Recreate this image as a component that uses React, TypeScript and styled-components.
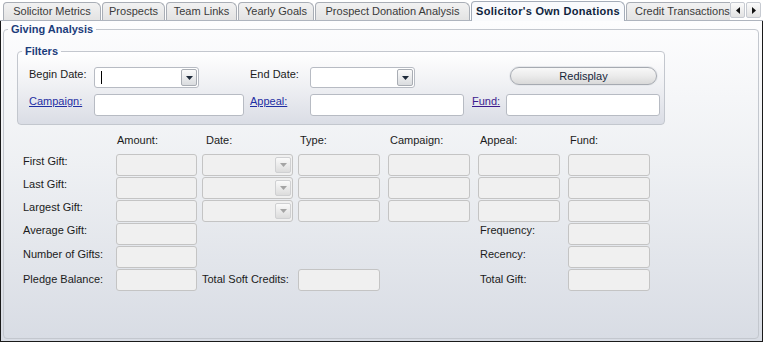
import React from 'react';
import styled, { createGlobalStyle } from 'styled-components';

const GlobalStyle = createGlobalStyle`
  html, body {
    margin: 0;
    padding: 0;
    background: #ffffff;
  }
  body {
    font-family: "Liberation Sans", Arial, sans-serif;
    font-size: 11px;
    color: #1b1b1b;
  }
  * {
    box-sizing: border-box;
  }
`;

const Frame = styled.div`
  width: 763px;
  height: 342px;
  display: flex;
  flex-direction: column;
  background: #ffffff;
  overflow: hidden;
`;

const TabStrip = styled.div`
  flex: none;
  height: 21px;
  display: flex;
  align-items: flex-end;
  padding-left: 3px;
  background: linear-gradient(#aeb4be, #aeb4be) bottom left / 100% 1px no-repeat, #ffffff;
`;

const TabList = styled.div`
  flex: 1;
  min-width: 0;
  height: 100%;
  display: flex;
  align-items: flex-end;
  gap: 1px;
  overflow: hidden;
`;

const Tab = styled.div<{ $active?: boolean; $w: number; $left?: boolean }>`
  flex: none;
  width: ${p => p.$w}px;
  height: ${p => (p.$active ? 20 : 18)}px;
  margin-bottom: ${p => (p.$active ? 0 : 1)}px;
  padding-left: ${p => (p.$left ? 8 : 0)}px;
  border: 1px solid ${p => (p.$active ? '#a5adb9' : '#a9aeb6')};
  border-bottom: none;
  border-radius: 4px 6px 0 0;
  background: ${p => (p.$active ? '#f9fafc' : 'linear-gradient(#f2f2f2, #e3e3e3)')};
  color: ${p => (p.$active ? '#0f1f3d' : '#3a3a3a')};
  font-weight: ${p => (p.$active ? 'bold' : 'normal')};
  letter-spacing: ${p => (p.$active ? '0.3px' : '0')};
  line-height: ${p => (p.$active ? 18 : 16)}px;
  text-align: ${p => (p.$left ? 'left' : 'center')};
  white-space: nowrap;
  overflow: hidden;
`;

const ScrollButtons = styled.div`
  flex: none;
  align-self: flex-start;
  margin-top: 2px;
  padding-right: 2px;
  display: flex;
  gap: 1px;
`;

const ScrollButton = styled.div`
  width: 15px;
  height: 16px;
  border: 1px solid #c6cad1;
  border-radius: 2px;
  background: linear-gradient(#fbfbfb, #e2e2e2);
  display: flex;
  align-items: center;
  justify-content: center;
`;

const Panel = styled.div`
  flex: 1;
  display: flex;
  flex-direction: column;
  border: 1px solid #1a1a1a;
  border-top: none;
  padding: 2px 3px 2px 2px;
  background: linear-gradient(#fdfdfe 0%, #eef0f3 45%, #d8dce4 100%);
`;

const GroupBox = styled.fieldset`
  flex: 1;
  min-width: 0;
  margin: 0;
  padding: 0;
  border: 1px solid #c3c7ce;
  border-radius: 4px;
`;

const FilterBox = styled.fieldset`
  width: 648px;
  margin: 0;
  padding: 9px 0 8px 0;
  border: 1px solid #c3c7ce;
  border-radius: 4px;
  background: linear-gradient(#ffffff 0%, #f0f1f4 45%, #dadde5 100%);
`;

const Legend = styled.legend`
  margin-left: 4px;
  padding: 0 3px;
  font-size: 11px;
  line-height: 13px;
  font-weight: bold;
  color: #1c3d7b;
`;

const GroupBody = styled.div`
  padding: 9px 0 0 13px;
`;

const FilterGrid = styled.div`
  padding-left: 11px;
  display: grid;
  grid-template-columns: 65px 156px 60px 162px 34px 154px;
  row-gap: 6px;
  align-items: start;
`;

const Label = styled.span<{ $col?: number; $indent?: number; $top?: number }>`
  grid-column: ${p => (p.$col ? p.$col : 'auto')};
  padding-top: ${p => (p.$top === undefined ? 1 : p.$top)}px;
  padding-left: ${p => p.$indent || 0}px;
  line-height: 13px;
  white-space: nowrap;
  color: #1b1b1b;
`;

const LinkLabel = styled.a<{ $visited?: boolean }>`
  padding-top: 1px;
  line-height: 13px;
  color: ${p => (p.$visited ? '#3c1a8e' : '#1f2fa3')};
  text-decoration: underline;
  white-space: nowrap;
  cursor: pointer;
`;

const ComboBox = styled.div`
  width: 105px;
  height: 21px;
  display: flex;
  align-items: stretch;
  padding: 1px;
  border: 1px solid #b7bbc3;
  border-radius: 3px;
  background: #ffffff;
`;

const ComboText = styled.div`
  flex: 1;
  display: flex;
  align-items: center;
  padding-left: 5px;
`;

const Caret = styled.span`
  width: 1px;
  height: 13px;
  background: #000000;
`;

const DropButton = styled.div<{ $disabled?: boolean }>`
  width: 16px;
  display: flex;
  align-items: center;
  justify-content: center;
  border: 1px solid ${p => (p.$disabled ? '#cfd0d2' : '#a9adb4')};
  border-radius: 2px;
  background: ${p =>
    p.$disabled ? 'linear-gradient(#fafafa, #dcdcdc)' : 'linear-gradient(#fbfbfb, #dadcdf)'};
`;

const TextBox = styled.div<{ $w: number }>`
  width: ${p => p.$w}px;
  height: 22px;
  border: 1px solid #b7bbc3;
  border-radius: 3px;
  background: #ffffff;
`;

const Button = styled.button`
  grid-column: 5 / span 2;
  justify-self: end;
  margin-right: 3px;
  width: 147px;
  height: 18px;
  padding: 0;
  border: 1px solid #a6aab1;
  border-radius: 9px;
  background: linear-gradient(#f8f8f8 0%, #ebebeb 50%, #d9d9d9 100%);
  box-shadow: 0 0 0 1px #e6e8ec;
  font-family: "Liberation Sans", Arial, sans-serif;
  font-size: 11px;
  line-height: 16px;
  color: #18263a;
`;

const StatsGrid = styled.div`
  margin: 8px 0 0 6px;
  display: grid;
  grid-template-columns: 93px 86px 96px 90px 90px 90px 82px;
  grid-template-rows: 20px repeat(6, 22px);
  row-gap: 1px;
  align-items: start;
`;

const ReadField = styled.div<{ $col: number; $w?: number }>`
  grid-column: ${p => p.$col};
  width: ${p => p.$w || 82}px;
  height: 22px;
  display: flex;
  justify-content: flex-end;
  padding: 2px 1px 2px 0;
  border: 1px solid #c4c4c4;
  border-radius: 3px;
  background: #f0f0f0;
`;

const Arrow = ({ dir, color = '#111' }: { dir: 'down' | 'left' | 'right'; color?: string }) => {
  if (dir === 'down') {
    return (
      <svg width="7" height="4" viewBox="0 0 7 4">
        <path d="M0 0 H7 L3.5 4 Z" fill={color} />
      </svg>
    );
  }
  return (
    <svg width="4" height="7" viewBox="0 0 4 7">
      <path d={dir === 'left' ? 'M4 0 V7 L0 3.5 Z' : 'M0 0 V7 L4 3.5 Z'} fill={color} />
    </svg>
  );
};

const tabs = [
  { title: 'Solicitor Metrics', w: 98 },
  { title: 'Prospects', w: 63 },
  { title: 'Team Links', w: 71 },
  { title: 'Yearly Goals', w: 76 },
  { title: 'Prospect Donation Analysis', w: 155 },
  { title: "Solicitor's Own Donations", w: 154, active: true },
  { title: 'Credit Transactions', w: 150, left: true },
];

const headers = [
  { text: 'Amount:', indent: 1 },
  { text: 'Date:', indent: 4 },
  { text: 'Type:', indent: 2 },
  { text: 'Campaign:', indent: 2 },
  { text: 'Appeal:', indent: 2 },
  { text: 'Fund:', indent: 2 },
];

const giftRows = ['First Gift:', 'Last Gift:', 'Largest Gift:'];

const App: React.FC = () => {
  return (
    <Frame>
      <GlobalStyle />
      <TabStrip>
        <TabList>
          {tabs.map(tab => (
            <Tab key={tab.title} $w={tab.w} $active={tab.active} $left={tab.left}>
              {tab.title}
            </Tab>
          ))}
        </TabList>
        <ScrollButtons>
          <ScrollButton>
            <Arrow dir="left" />
          </ScrollButton>
          <ScrollButton>
            <Arrow dir="right" />
          </ScrollButton>
        </ScrollButtons>
      </TabStrip>

      <Panel>
        <GroupBox>
          <Legend>Giving Analysis</Legend>
          <GroupBody>
            <FilterBox>
              <Legend>Filters</Legend>
              <FilterGrid>
                <Label>Begin Date:</Label>
                <ComboBox>
                  <ComboText>
                    <Caret />
                  </ComboText>
                  <DropButton>
                    <Arrow dir="down" color="#1e2a3a" />
                  </DropButton>
                </ComboBox>
                <Label>End Date:</Label>
                <ComboBox>
                  <ComboText />
                  <DropButton>
                    <Arrow dir="down" color="#1e2a3a" />
                  </DropButton>
                </ComboBox>
                <Button>Redisplay</Button>

                <LinkLabel>Campaign:</LinkLabel>
                <TextBox $w={150} />
                <LinkLabel>Appeal:</LinkLabel>
                <TextBox $w={154} />
                <LinkLabel $visited>Fund:</LinkLabel>
                <TextBox $w={154} />
              </FilterGrid>
            </FilterBox>

            <StatsGrid>
              {headers.map((h, i) => (
                <Label key={h.text} $col={i + 2} $indent={h.indent}>
                  {h.text}
                </Label>
              ))}

              {giftRows.map(label => (
                <React.Fragment key={label}>
                  <Label $col={1}>{label}</Label>
                  <ReadField $col={2} $w={81} />
                  <ReadField $col={3} $w={91}>
                    <DropButton $disabled>
                      <Arrow dir="down" color="#a4a4a4" />
                    </DropButton>
                  </ReadField>
                  <ReadField $col={4} />
                  <ReadField $col={5} />
                  <ReadField $col={6} />
                  <ReadField $col={7} />
                </React.Fragment>
              ))}

              <Label $col={1}>Average Gift:</Label>
              <ReadField $col={2} $w={81} />
              <Label $col={6} $indent={2}>Frequency:</Label>
              <ReadField $col={7} />

              <Label $col={1} $top={2}>Number of Gifts:</Label>
              <ReadField $col={2} $w={81} />
              <Label $col={6} $indent={2} $top={2}>Recency:</Label>
              <ReadField $col={7} />

              <Label $col={1} $top={4}>Pledge Balance:</Label>
              <ReadField $col={2} $w={81} />
              <Label $col={3} $top={4}>Total Soft Credits:</Label>
              <ReadField $col={4} />
              <Label $col={6} $indent={2} $top={4}>Total Gift:</Label>
              <ReadField $col={7} />
            </StatsGrid>
          </GroupBody>
        </GroupBox>
      </Panel>
    </Frame>
  );
};

export default App;
